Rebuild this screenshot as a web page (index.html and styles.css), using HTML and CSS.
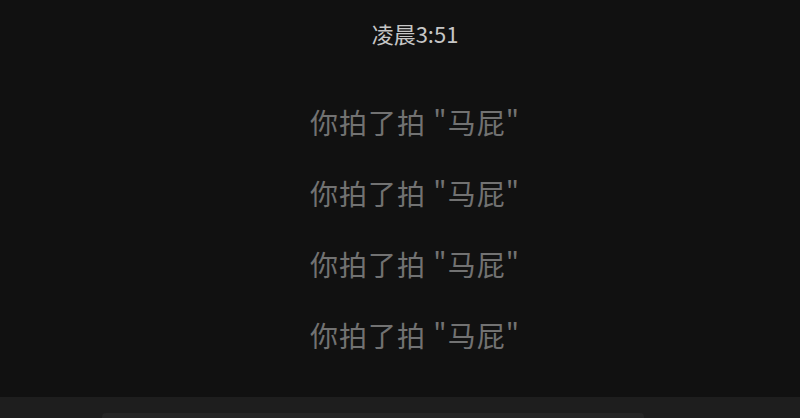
FILE: index.html
```html
<!DOCTYPE html>
<html lang="zh">
<head>
<meta charset="utf-8">
<link rel="stylesheet" href="styles.css">
</head>
<body>
<div class="page">
  <main class="chat">
    <div class="time">凌晨3:51</div>
    <ul class="msgs">
      <li class="pat">你拍了拍 "马屁"</li>
      <li class="pat">你拍了拍 "马屁"</li>
      <li class="pat">你拍了拍 "马屁"</li>
      <li class="pat">你拍了拍 "马屁"</li>
    </ul>
  </main>
  <footer class="bar">
    <div class="input"></div>
  </footer>
</div>
</body>
</html>
```

FILE: styles.css
```css
html, body {
  margin: 0;
  padding: 0;
  background: #111111;
}
.page {
  width: 800px;
  height: 418px;
  display: flex;
  flex-direction: column;
  overflow: hidden;
  font-family: "Noto Sans CJK SC", "Noto Sans", sans-serif;
}
.chat {
  flex: 1;
  display: flex;
  flex-direction: column;
  align-items: center;
  padding-left: 30px;
}
.time {
  margin-top: 18px;
  height: 30px;
  line-height: 30px;
  font-size: 22px;
  color: #c6c6c6;
}
.msgs {
  list-style: none;
  margin: 55px 0 0 0;
  padding: 0;
  display: flex;
  flex-direction: column;
  align-items: center;
  gap: 33px;
}
.pat {
  height: 38px;
  line-height: 38px;
  font-size: 28px;
  letter-spacing: 1px;
  color: #727272;
}
.bar {
  height: 21px;
  background: #1e1e1e;
  display: flex;
  align-items: flex-end;
  padding-left: 102px;
}
.input {
  width: 542px;
  height: 5px;
  background: #262626;
  border-radius: 4px 4px 0 0;
}
```
